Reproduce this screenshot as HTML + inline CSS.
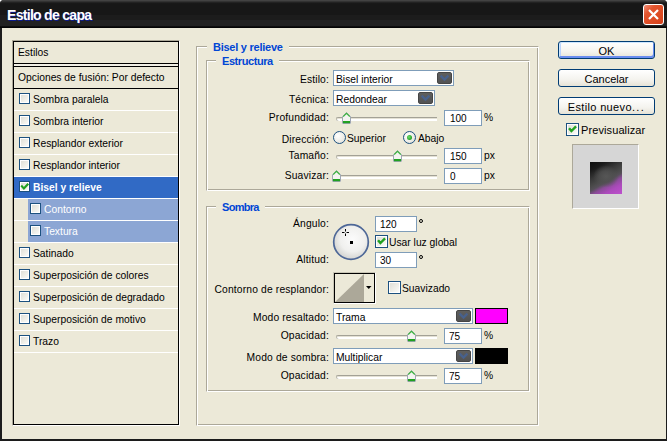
<!DOCTYPE html>
<html><head><meta charset="utf-8">
<style>
*{margin:0;padding:0;box-sizing:border-box}
html,body{width:667px;height:441px;overflow:hidden;background:#fff}
body{position:relative;font-family:"Liberation Sans",sans-serif;font-size:11px;color:#000}
.a{position:absolute}
.t{position:absolute;white-space:nowrap;font-size:10.3px;line-height:13px;letter-spacing:0px}
.r{text-align:right;letter-spacing:0.15px}
.b{font-weight:bold}
#win{left:0;top:0;width:667px;height:441px;background:#1c1c1c;border-radius:4px 4px 0 0;overflow:hidden}
#title{left:0;top:0;width:667px;height:28px;background:linear-gradient(#4a4a4a 0,#3a3a3a 1px,#2a2a2a 2px,#1a1a1a 3px,#171717 4px,#171717 15px,#1c1c1c 15px,#1c1c1c 20px,#222 20px,#222 26px,#161616 26px,#050505 27px)}
#ttxt{left:7px;top:7px;font-size:14px;line-height:17px;font-weight:bold;color:#fff;letter-spacing:-0.7px;text-shadow:1px 1px 0 #0a1a8a}
#close{left:643px;top:4px;width:21px;height:21px;border:1px solid #fff;border-radius:3px;background:linear-gradient(135deg,#f0907a 0,#e4552e 30%,#dc4a22 70%,#d4401a 100%)}
#content{left:2px;top:28px;width:664px;height:411px;background:#ece9d8}
/* left panel */
#lp{left:12px;top:40px;width:168px;height:386px;border-top:1px solid #aca899;border-left:1px solid #aca899;border-right:1px solid #fff;border-bottom:1px solid #fff}
#lpi{left:0;top:0;width:166px;height:384px;border:1px solid #000;background:#ece9d8}
.sep{position:absolute;left:14px;width:164px;height:1px;background:#fff}
.cb{position:absolute;width:11px;height:11px;border:1px solid #1c5180;background:linear-gradient(135deg,#dcdcd5 0,#f0f0ea 60%,#fff 100%);box-shadow:inset 0 0 0 1px #fff}
.grp{position:absolute;border-top:1px solid #aca899;border-left:1px solid #aca899;border-right:1px solid #fff;border-bottom:1px solid #fff;box-shadow:inset 1px 1px 0 #fff, 1px 1px 0 #aca899}
.gt{position:absolute;font-weight:bold;color:#0046d5;background:#ece9d8;padding:0 6px 0 6px;white-space:nowrap;font-size:11px;line-height:13px;letter-spacing:-0.25px}
.sel{position:absolute;height:16px;border:1px solid #7f9db9;background:#fff}
.dd{position:absolute;top:1px;width:15px;height:12px;border-radius:2px;background:linear-gradient(#5e5e5e,#525252);border:1px solid #454545}
.inp .t{font-size:10px;top:1px !important}
.inp{position:absolute;height:16px;border:1px solid #7f9db9;background:#fff}
.trk{position:absolute;height:4px;width:101px;border-radius:2px 0 0 2px;box-shadow:inset 1px 0 0 #b3b1a5;background:linear-gradient(#a3a196 0,#a3a196 1px,#e4e1d4 1px,#e4e1d4 2px,#fff 2px,#fff 4px)}
.btn .t{font-size:11px}
.def{box-shadow:inset 1px 1px 0 #cee7ff,inset -1px -2px 0 #698cef,inset 2px 0 0 #bad3fc}
.btn{position:absolute;left:558px;width:97px;height:18px;border:1px solid #003c74;border-radius:3px;background:linear-gradient(#fff 0,#f4f3ee 60%,#e6e3d6 100%);text-align:center}
.thumb{position:absolute;width:9px;height:12px}
.rad{position:absolute;width:13px;height:13px;border-radius:50%;border:1px solid #1c5180;background:radial-gradient(circle at 35% 35%,#fff 0,#ececE6 60%,#d6d3c8 100%)}
.dial{position:absolute;width:36px;height:36px;border-radius:50%;border:2px solid #4a6490;background:radial-gradient(circle at 40% 35%,#fff 0,#f2f2f0 50%,#dcdcd8 100%)}
.contour{position:absolute;width:42px;height:31px;border:1px solid #000;background:#ece9d8}
</style></head><body>
<div id="win" class="a">
  <div id="title" class="a"></div>
  <div id="ttxt" class="a">Estilo de capa</div>
  <div id="close" class="a"><svg class="a" style="left:0;top:0" width="19" height="19" viewBox="0 0 19 19"><path d="M5 5 L14 14 M14 5 L5 14" stroke="#fff" stroke-width="2.2"/></svg></div>
  <div id="content" class="a"></div>
</div>

<!-- left panel -->
<div id="lp" class="a"><div id="lpi" class="a"></div></div>
<div class="t" style="left:18px;top:46px">Estilos</div>
<div class="a" style="left:14px;top:63px;width:164px;height:1px;background:#000"></div>
<div class="a" style="left:14px;top:64px;width:164px;height:2px;background:#f1efe5"></div>
<div class="a" style="left:14px;top:66px;width:164px;height:1px;background:#000"></div>
<div class="t" style="left:18px;top:71px">Opciones de fusión: Por defecto</div>
<div class="a" style="left:14px;top:88px;width:164px;height:1px;background:#000"></div>
<div class="sep" style="top:110px"></div>
<div class="cb" style="left:19px;top:93px"></div>
<div class="t" style="left:33px;top:93px">Sombra paralela</div>
<div class="sep" style="top:132px"></div>
<div class="cb" style="left:19px;top:115px"></div>
<div class="t" style="left:33px;top:115px">Sombra interior</div>
<div class="sep" style="top:154px"></div>
<div class="cb" style="left:19px;top:137px"></div>
<div class="t" style="left:33px;top:137px">Resplandor exterior</div>
<div class="sep" style="top:176px"></div>
<div class="cb" style="left:19px;top:159px"></div>
<div class="t" style="left:33px;top:159px">Resplandor interior</div>
<div class="sep" style="top:198px"></div>
<div class="a" style="left:14px;top:177px;width:164px;height:21px;background:#316ac5"></div>
<div class="cb ck" style="left:19px;top:181px"><svg class="a" style="left:-1px;top:-1px" width="11" height="11" viewBox="0 0 11 11"><path d="M3 5.4 L4.9 7.4 L8.5 3.6" stroke="#21a121" stroke-width="2.2" fill="none" stroke-linecap="square"/></svg></div>
<div class="t b" style="left:33px;top:181px;color:#fff">Bisel y relieve</div>
<div class="sep" style="top:220px"></div>
<div class="a" style="left:28px;top:199px;width:150px;height:21px;background:#8ca6d4"></div>
<div class="cb" style="left:30px;top:203px"></div>
<div class="t" style="left:44px;top:203px;color:#fff">Contorno</div>
<div class="sep" style="top:242px"></div>
<div class="a" style="left:28px;top:221px;width:150px;height:21px;background:#8ca6d4"></div>
<div class="cb" style="left:30px;top:225px"></div>
<div class="t" style="left:44px;top:225px;color:#fff">Textura</div>
<div class="sep" style="top:264px"></div>
<div class="cb" style="left:19px;top:247px"></div>
<div class="t" style="left:33px;top:247px">Satinado</div>
<div class="sep" style="top:286px"></div>
<div class="cb" style="left:19px;top:269px"></div>
<div class="t" style="left:33px;top:269px">Superposición de colores</div>
<div class="sep" style="top:308px"></div>
<div class="cb" style="left:19px;top:291px"></div>
<div class="t" style="left:33px;top:291px">Superposición de degradado</div>
<div class="sep" style="top:330px"></div>
<div class="cb" style="left:19px;top:313px"></div>
<div class="t" style="left:33px;top:313px">Superposición de motivo</div>
<div class="sep" style="top:352px"></div>
<div class="cb" style="left:19px;top:335px"></div>
<div class="t" style="left:33px;top:335px">Trazo</div>


<!-- group boxes -->
<div class="a" style="left:196px;top:46px;width:343px;height:380px;border-top:1px solid #aca899;border-left:1px solid #aca899;border-right:1px solid #fff;border-bottom:1px solid #fff;box-shadow:inset 1px 1px 0 #fff,inset -1px -1px 0 #aca899"></div>
<div class="gt" style="left:207px;top:41px">Bisel y relieve</div>
<div class="a" style="left:206px;top:60px;width:324px;height:131px;border-top:1px solid #aca899;border-left:1px solid #aca899;border-right:1px solid #fff;border-bottom:1px solid #fff;box-shadow:inset 1px 1px 0 #fff,inset -1px -1px 0 #aca899"></div>
<div class="gt" style="left:216px;top:55px;letter-spacing:-0.42px">Estructura</div>
<div class="a" style="left:206px;top:206px;width:324px;height:186px;border-top:1px solid #aca899;border-left:1px solid #aca899;border-right:1px solid #fff;border-bottom:1px solid #fff;box-shadow:inset 1px 1px 0 #fff,inset -1px -1px 0 #aca899"></div>
<div class="gt" style="left:216px;top:201px;letter-spacing:-0.7px">Sombra</div>

<!-- Estructura -->
<div class="t r" style="right:338px;top:73px">Estilo:</div>
<div class="sel" style="left:333px;top:70px;width:121px"><div class="t" style="left:2px;top:2px">Bisel interior</div><div class="dd" style="left:103px"><svg class="a" style="left:0;top:0" width="13" height="10" viewBox="0 0 13 10"><path d="M2.6 2.6 L6.5 6.5 L10.4 2.6" stroke="#48618c" stroke-width="2.4" fill="none"/></svg></div></div>
<div class="t r" style="right:338px;top:93px">Técnica:</div>
<div class="sel" style="left:333px;top:90px;width:102px"><div class="t" style="left:2px;top:2px">Redondear</div><div class="dd" style="left:84px"><svg class="a" style="left:0;top:0" width="13" height="10" viewBox="0 0 13 10"><path d="M2.6 2.6 L6.5 6.5 L10.4 2.6" stroke="#48618c" stroke-width="2.4" fill="none"/></svg></div></div>
<div class="t r" style="right:338px;top:111px">Profundidad:</div>
<div class="trk" style="left:336px;top:117px"></div>
<div class="thumb" style="left:342px;top:112px"><svg width="10" height="13" viewBox="0 0 10 13"><path d="M0.5 4.5 L4.5 0.5 L8.5 4.5 L8.5 11 Q8.5 11.5 8 11.5 L1 11.5 Q0.5 11.5 0.5 11 Z" fill="#f4f4f1" stroke="#9fa7b4" stroke-width="1"/><path d="M1.2 4.6 L4.5 1.3 L7.8 4.6" stroke="#3cb83c" stroke-width="1.2" fill="none"/><rect x="1" y="9" width="7" height="2.2" fill="#21a121"/></svg></div>
<div class="inp" style="left:444px;top:110px;width:38px"><div class="t" style="left:5px;top:2px">100</div></div>
<div class="t" style="left:484px;top:111px">%</div>

<div class="t r" style="right:338px;top:133px">Dirección:</div>
<div class="rad" style="left:333px;top:131px"></div>
<div class="t" style="left:347px;top:132px">Superior</div>
<div class="rad on" style="left:403px;top:131px"><div class="a" style="left:3px;top:3px;width:5px;height:5px;border-radius:50%;background:radial-gradient(circle at 40% 40%,#6fdc6f 0,#21a121 70%)"></div></div>
<div class="t" style="left:418px;top:132px">Abajo</div>

<div class="t r" style="right:338px;top:149px">Tamaño:</div>
<div class="trk" style="left:336px;top:155px"></div>
<div class="thumb" style="left:393px;top:150px"><svg width="10" height="13" viewBox="0 0 10 13"><path d="M0.5 4.5 L4.5 0.5 L8.5 4.5 L8.5 11 Q8.5 11.5 8 11.5 L1 11.5 Q0.5 11.5 0.5 11 Z" fill="#f4f4f1" stroke="#9fa7b4" stroke-width="1"/><path d="M1.2 4.6 L4.5 1.3 L7.8 4.6" stroke="#3cb83c" stroke-width="1.2" fill="none"/><rect x="1" y="9" width="7" height="2.2" fill="#21a121"/></svg></div>
<div class="inp" style="left:444px;top:148px;width:38px"><div class="t" style="left:5px;top:2px">150</div></div>
<div class="t" style="left:484px;top:149px">px</div>

<div class="t r" style="right:338px;top:169px">Suavizar:</div>
<div class="trk" style="left:336px;top:175px"></div>
<div class="thumb" style="left:332px;top:170px"><svg width="10" height="13" viewBox="0 0 10 13"><path d="M0.5 4.5 L4.5 0.5 L8.5 4.5 L8.5 11 Q8.5 11.5 8 11.5 L1 11.5 Q0.5 11.5 0.5 11 Z" fill="#f4f4f1" stroke="#9fa7b4" stroke-width="1"/><path d="M1.2 4.6 L4.5 1.3 L7.8 4.6" stroke="#3cb83c" stroke-width="1.2" fill="none"/><rect x="1" y="9" width="7" height="2.2" fill="#21a121"/></svg></div>
<div class="inp" style="left:444px;top:168px;width:38px"><div class="t" style="left:5px;top:2px">0</div></div>
<div class="t" style="left:484px;top:169px">px</div>

<!-- Sombra -->
<div class="t r" style="right:338px;top:217px">Ángulo:</div>
<svg class="a" style="left:332px;top:223px" width="38" height="38" viewBox="0 0 38 38"><defs><radialGradient id="dg" cx="0.55" cy="0.42" r="0.6"><stop offset="0" stop-color="#fbfbfb"/><stop offset="0.6" stop-color="#f0f0ee"/><stop offset="1" stop-color="#d2d2cf"/></radialGradient></defs><circle cx="19" cy="19" r="17.3" fill="url(#dg)" stroke="#4d6797" stroke-width="1.7"/></svg>
<div class="a" style="left:350px;top:241px;width:3px;height:3px;background:#000"></div>
<svg class="a" style="left:341px;top:228px" width="9" height="9" viewBox="0 0 9 9"><path d="M4.5 1 V3.5 M4.5 5.5 V8 M1 4.5 H3.5 M5.5 4.5 H8" stroke="#000" stroke-width="1"/></svg>
<div class="inp" style="left:375px;top:216px;width:42px"><div class="t" style="left:4px;top:2px">120</div></div>
<div class="a" style="left:419px;top:219px;width:4px;height:4px;border:1px solid #000;border-radius:50%"></div>
<div class="cb ck" style="left:375px;top:235px;width:13px;height:13px"><svg class="a" style="left:-1px;top:-1px" width="13" height="13" viewBox="0 0 13 13"><path d="M3.8 6.1 L5.4 8 L9.2 4.2" stroke="#21a121" stroke-width="2.4" fill="none" stroke-linecap="square"/></svg></div>
<div class="t" style="left:389px;top:236px">Usar luz global</div>
<div class="t r" style="right:338px;top:253px">Altitud:</div>
<div class="inp" style="left:375px;top:252px;width:42px"><div class="t" style="left:4px;top:2px">30</div></div>
<div class="a" style="left:419px;top:255px;width:4px;height:4px;border:1px solid #000;border-radius:50%"></div>

<div class="t r" style="right:338px;top:283px">Contorno de resplandor:</div>
<div class="a" style="left:333px;top:272px;width:43px;height:32px;border-top:1px solid #c9c6b6;border-left:1px solid #c9c6b6;border-right:1px solid #fff;border-bottom:1px solid #fff"></div>
<div class="contour" style="left:334px;top:273px;width:41px;height:30px"><svg class="a" style="left:0;top:0" width="39" height="28" viewBox="0 0 39 28"><path d="M0 28 L29 0 L29 28 Z" fill="#aca899"/><path d="M31 12 H36.5 L33.75 15 Z" fill="#000"/></svg></div>
<div class="cb" style="left:388px;top:281px;width:13px;height:13px"></div>
<div class="t" style="left:402px;top:282px">Suavizado</div>

<div class="t r" style="right:338px;top:311px">Modo resaltado:</div>
<div class="sel" style="left:333px;top:308px;width:140px"><div class="t" style="left:2px;top:2px">Trama</div><div class="dd" style="left:122px"><svg class="a" style="left:0;top:0" width="13" height="10" viewBox="0 0 13 10"><path d="M2.6 2.6 L6.5 6.5 L10.4 2.6" stroke="#48618c" stroke-width="2.4" fill="none"/></svg></div></div>
<div class="a" style="left:475px;top:308px;width:33px;height:16px;border:1px solid #000;background:#ff00ff"></div>
<div class="t r" style="right:338px;top:329px">Opacidad:</div>
<div class="trk" style="left:336px;top:335px"></div>
<div class="thumb" style="left:407px;top:330px"><svg width="10" height="13" viewBox="0 0 10 13"><path d="M0.5 4.5 L4.5 0.5 L8.5 4.5 L8.5 11 Q8.5 11.5 8 11.5 L1 11.5 Q0.5 11.5 0.5 11 Z" fill="#f4f4f1" stroke="#9fa7b4" stroke-width="1"/><path d="M1.2 4.6 L4.5 1.3 L7.8 4.6" stroke="#3cb83c" stroke-width="1.2" fill="none"/><rect x="1" y="9" width="7" height="2.2" fill="#21a121"/></svg></div>
<div class="inp" style="left:444px;top:328px;width:38px"><div class="t" style="left:4px;top:2px">75</div></div>
<div class="t" style="left:484px;top:329px">%</div>

<div class="t r" style="right:338px;top:351px">Modo de sombra:</div>
<div class="sel" style="left:333px;top:348px;width:140px"><div class="t" style="left:2px;top:2px">Multiplicar</div><div class="dd" style="left:122px"><svg class="a" style="left:0;top:0" width="13" height="10" viewBox="0 0 13 10"><path d="M2.6 2.6 L6.5 6.5 L10.4 2.6" stroke="#48618c" stroke-width="2.4" fill="none"/></svg></div></div>
<div class="a" style="left:475px;top:348px;width:33px;height:16px;border:1px solid #000;background:#000"></div>
<div class="t r" style="right:338px;top:369px">Opacidad:</div>
<div class="trk" style="left:336px;top:375px"></div>
<div class="thumb" style="left:407px;top:370px"><svg width="10" height="13" viewBox="0 0 10 13"><path d="M0.5 4.5 L4.5 0.5 L8.5 4.5 L8.5 11 Q8.5 11.5 8 11.5 L1 11.5 Q0.5 11.5 0.5 11 Z" fill="#f4f4f1" stroke="#9fa7b4" stroke-width="1"/><path d="M1.2 4.6 L4.5 1.3 L7.8 4.6" stroke="#3cb83c" stroke-width="1.2" fill="none"/><rect x="1" y="9" width="7" height="2.2" fill="#21a121"/></svg></div>
<div class="inp" style="left:444px;top:368px;width:38px"><div class="t" style="left:4px;top:2px">75</div></div>
<div class="t" style="left:484px;top:369px">%</div>

<!-- buttons -->
<div class="btn def" style="top:41px"><div class="t" style="left:0;width:95px;text-align:center;top:3px">OK</div></div>
<div class="btn" style="top:69px"><div class="t" style="left:0;width:95px;text-align:center;top:3px">Cancelar</div></div>
<div class="btn" style="top:97px"><div class="t" style="left:0;width:95px;text-align:center;top:3px;letter-spacing:0.35px">Estilo nuevo<span style="letter-spacing:1.4px">...</span></div></div>
<div class="cb ck" style="left:566px;top:123px;width:13px;height:13px"><svg class="a" style="left:-1px;top:-1px" width="13" height="13" viewBox="0 0 13 13"><path d="M3.8 6.1 L5.4 8 L9.2 4.2" stroke="#21a121" stroke-width="2.4" fill="none" stroke-linecap="square"/></svg></div>
<div class="t" style="left:581px;top:124px;font-size:11px;letter-spacing:0.1px">Previsualizar</div>
<div class="a" style="left:572px;top:144px;width:67px;height:65px;border-top:1px solid #aca899;border-left:1px solid #aca899;border-right:1px solid #fff;border-bottom:1px solid #fff;background:#d6d6d6"></div>
<div class="a" style="left:590px;top:162px;width:32px;height:32px;background:radial-gradient(ellipse 40% 35% at 50% 45%,rgba(86,86,86,1) 0,rgba(80,80,80,0.8) 50%,rgba(70,70,70,0) 100%),linear-gradient(150deg,#0e0e0e 0%,#1a1a1a 18%,#383838 36%,#4a4a4a 50%,#555058 58%,#8a4c98 67%,#ac4abc 80%,#bd50cd 100%)"></div>
</body></html>
